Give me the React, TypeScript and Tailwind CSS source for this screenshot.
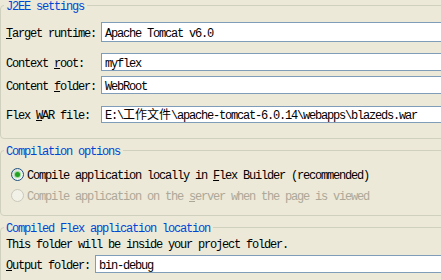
import React from 'react'

function Group({ title, className, children }: { title: string; className?: string; children: React.ReactNode }) {
  return (
    <div className={`relative shrink-0 w-[470px] rounded-[4px] border border-[#D0D0BF] ${className ?? ''}`}>
      <span className="absolute left-[3px] top-[-5px] h-[12px] leading-[12px] pl-[2px] pr-[3px] bg-[#ECE9D8] text-[#0046D5] whitespace-nowrap">
        {title}
      </span>
      {children}
    </div>
  )
}

function Field({ label, value, className, labelW }: { label: React.ReactNode; value: React.ReactNode; className: string; labelW?: string }) {
  return (
    <div className={`flex items-center ${className}`}>
      <div className={`${labelW ?? 'w-[100px]'} pl-[5px] pt-[3px] shrink-0 whitespace-nowrap`}>{label}</div>
      <div className="flex-1 h-full flex items-center border border-[#7F9DB9] bg-white pl-[3px] whitespace-nowrap">
        <span className="pt-[3px]">{value}</span>
      </div>
    </div>
  )
}

function Radio({ on, disabled }: { on?: boolean; disabled?: boolean }) {
  return (
    <div
      className={`w-[13px] h-[13px] rounded-full border flex items-center justify-center shrink-0 ${
        disabled ? 'border-[#CAC8BB] bg-[#F2F1E8]' : 'border-[#1C5180] bg-gradient-to-br from-[#DCDCD7] to-white'
      }`}
    >
      {on && <div className="w-[5px] h-[5px] rounded-full bg-[#21A121] shadow-[0_0_1px_1px_#9BD89B]" />}
    </div>
  )
}

export default function App() {
  return (
    <div className="w-[441px] h-[280px] overflow-hidden flex flex-col pt-[5px] bg-[#ECE9D8] text-black font-['Liberation_Mono','Noto_Sans_CJK_SC',monospace] text-[12px] tracking-[-1.2px] leading-[12px]">
      {/* J2EE settings */}
      <Group title="J2EE settings">
        <div className="pt-[16px] pb-[15px]">
          <Field
            className="h-[20px]"
            label={<><span className="underline">T</span>arget runtime:</>}
            value="Apache Tomcat v6.0"
          />
          <Field
            className="mt-[11px] h-[18px]"
            label={<>Context <span className="underline">r</span>oot:</>}
            value="myflex"
          />
          <Field
            className="mt-[5px] h-[18px]"
            label={<>Content <span className="underline">f</span>older:</>}
            value="WebRoot"
          />
          <Field
            className="mt-[12px] h-[17px]"
            label={<>Flex <span className="underline">W</span>AR file:</>}
            value={<>E:\<span className="tracking-normal">工作文件</span>\apache-tomcat-6.0.14\webapps\blazeds.war</>}
          />
        </div>
      </Group>

      {/* Compilation options */}
      <Group title="Compilation options" className="mt-[11px]">
        <div className="pl-[10px] pt-[17px] pb-[13px]">
          <div className="h-[13px] flex items-center gap-[3px] whitespace-nowrap">
            <Radio on />
            <span className="pt-[2px]">Compile application locally in <span className="underline">F</span>lex Builder (recommended)</span>
          </div>
          <div className="mt-[8px] h-[13px] flex items-center gap-[3px] whitespace-nowrap text-[#ACA899]">
            <Radio disabled />
            <span className="pt-[2px]">Compile application on the <span className="underline">s</span>erver when the page is viewed</span>
          </div>
        </div>
      </Group>

      {/* Compiled Flex application location */}
      <Group title="Compiled Flex application location" className="mt-[11px]">
        <div className="pt-[11px] pb-[10px]">
          <div className="h-[12px] pl-[5px] whitespace-nowrap">This folder will be inside your project folder.</div>
          <Field
            className="mt-[4px] h-[18px]"
            labelW="w-[94px]"
            label={<><span className="underline">O</span>utput folder:</>}
            value="bin-debug"
          />
        </div>
      </Group>
    </div>
  )
}
